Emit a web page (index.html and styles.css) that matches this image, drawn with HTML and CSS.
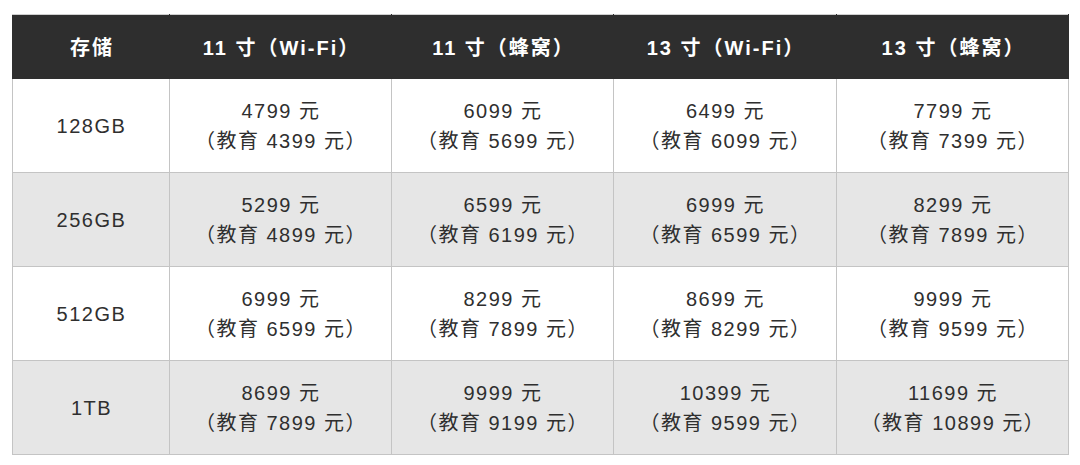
FILE: index.html
```html
<!DOCTYPE html>
<html lang="zh-CN">
<head>
<meta charset="utf-8">
<title>iPad 价格</title>
<link rel="stylesheet" href="styles.css">
</head>
<body>
<table class="price-table">
  <colgroup>
    <col class="c-storage">
    <col class="c-a">
    <col class="c-a">
    <col class="c-b">
    <col class="c-c">
  </colgroup>
  <thead>
    <tr>
      <th>存储</th>
      <th>11 寸（Wi-Fi）</th>
      <th>11 寸（蜂窝）</th>
      <th>13 寸（Wi-Fi）</th>
      <th>13 寸（蜂窝）</th>
    </tr>
  </thead>
  <tbody>
    <tr>
      <td>128GB</td>
      <td>4799 元<br>（教育 4399 元）</td>
      <td>6099 元<br>（教育 5699 元）</td>
      <td>6499 元<br>（教育 6099 元）</td>
      <td>7799 元<br>（教育 7399 元）</td>
    </tr>
    <tr class="alt">
      <td>256GB</td>
      <td>5299 元<br>（教育 4899 元）</td>
      <td>6599 元<br>（教育 6199 元）</td>
      <td>6999 元<br>（教育 6599 元）</td>
      <td>8299 元<br>（教育 7899 元）</td>
    </tr>
    <tr>
      <td>512GB</td>
      <td>6999 元<br>（教育 6599 元）</td>
      <td>8299 元<br>（教育 7899 元）</td>
      <td>8699 元<br>（教育 8299 元）</td>
      <td>9999 元<br>（教育 9599 元）</td>
    </tr>
    <tr class="alt">
      <td>1TB</td>
      <td>8699 元<br>（教育 7899 元）</td>
      <td>9999 元<br>（教育 9199 元）</td>
      <td>10399 元<br>（教育 9599 元）</td>
      <td>11699 元<br>（教育 10899 元）</td>
    </tr>
  </tbody>
</table>
</body>
</html>
```

FILE: styles.css
```css
html, body {
  margin: 0;
  padding: 0;
  background: #ffffff;
}
body {
  padding: 14px 12px;
  font-family: "Liberation Sans", "Noto Sans CJK SC", sans-serif;
}
.price-table {
  border-collapse: collapse;
  table-layout: fixed;
  width: 1056px;
  color: #2f2f2f;
}
.c-storage { width: 157px; }
.c-a { width: 222px; }
.c-b { width: 223px; }
.c-c { width: 232px; }
.price-table th {
  height: 63px;
  padding: 0 0 0 2px;
  background: #2e2e2e;
  color: #ffffff;
  font-size: 20px;
  font-weight: bold;
  letter-spacing: 2px;
  text-align: center;
  border: 1px solid #2e2e2e;
  border-top-color: #cfcfcf;
}
.price-table td {
  height: 93px;
  padding: 0 0 0 1px;
  text-align: center;
  vertical-align: middle;
  font-size: 20px;
  letter-spacing: 1.5px;
  line-height: 30px;
  border: 1px solid #c4c4c4;
  background: #ffffff;
}
.price-table tr.alt td {
  background: #e6e6e6;
}
```
